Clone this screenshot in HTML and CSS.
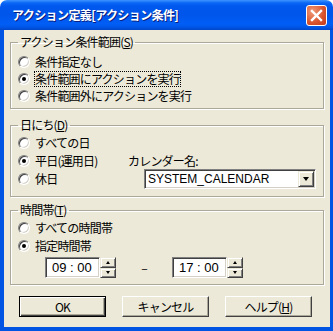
FILE: index.html
```html
<!DOCTYPE html>
<html lang="ja">
<head>
	<meta charset="UTF-8" />
	<title>アクション定義</title>
	<link rel="stylesheet" href="styles.css">
</head>
<body>
<div class="window">
	<div class="titlebar">
		<span class="title">アクション定義[アクション条件]</span>
		<span class="close">
			<svg width="13" height="13" viewBox="0 0 13 13"><path d="M2 2 L11 11 M11 2 L2 11" stroke="#fff" stroke-width="2.4" stroke-linecap="square"/></svg>
		</span>
	</div>
	<div class="client">
		<fieldset class="group g1">
			<legend>アクション条件範囲(<u>S</u>)</legend>
			<label class="radio"><span class="rb"></span>条件指定なし</label>
			<label class="radio on"><span class="rb"></span><span class="focus">条件範囲にアクションを実行</span></label>
			<label class="radio"><span class="rb"></span>条件範囲外にアクションを実行</label>
		</fieldset>

		<fieldset class="group g2">
			<legend>日にち(<u>D</u>)</legend>
			<div class="days">
				<label class="radio"><span class="rb"></span>すべての日</label>
				<span></span>
				<label class="radio on"><span class="rb"></span>平日(運用日)</label>
				<span class="cal-label">カレンダー名:</span>
				<label class="radio"><span class="rb"></span>休日</label>
				<div class="combo">
					<span class="combo-text">SYSTEM_CALENDAR</span>
					<span class="combo-btn"><span class="tri-down"></span></span>
				</div>
			</div>
		</fieldset>

		<fieldset class="group g3">
			<legend>時間帯(<u>T</u>)</legend>
			<label class="radio"><span class="rb"></span>すべての時間帯</label>
			<label class="radio on"><span class="rb"></span>指定時間帯</label>
			<div class="times">
				<div class="spin">
					<span class="edit">09 : 00</span>
					<span class="arrows">
						<span class="arr"><span class="tri-up"></span></span>
						<span class="arr"><span class="tri-down small"></span></span>
					</span>
				</div>
				<span class="dash">–</span>
				<div class="spin">
					<span class="edit">17 : 00</span>
					<span class="arrows">
						<span class="arr"><span class="tri-up"></span></span>
						<span class="arr"><span class="tri-down small"></span></span>
					</span>
				</div>
			</div>
		</fieldset>

		<div class="buttons">
			<span class="btn default">OK</span>
			<span class="btn">キャンセル</span>
			<span class="btn">ヘルプ(<u>H</u>)</span>
		</div>
	</div>
</div>
</body>
</html>
```

FILE: styles.css
```css
body{margin:0;background:#fff;font:12px/14px "Noto Sans CJK JP",sans-serif;color:#000;letter-spacing:-0.8px;}
.window{width:333px;height:331px;display:flex;flex-direction:column;}

/* title bar */
.titlebar{height:30px;display:flex;align-items:center;justify-content:space-between;padding:0 6px 0 12px;box-sizing:border-box;border-radius:7px 7px 0 0;background:linear-gradient(#3d95ff 0,#0a66f5 3px,#0058ee 6px,#0055ea 50%,#005ff7 80%,#0054e3 92%,#0046c8 100%);}
.title{color:#fff;font-weight:bold;font-size:12px;text-shadow:1px 1px #0a1f80;letter-spacing:-0.6px;}
.close{width:21px;height:21px;box-sizing:border-box;border:1px solid #fff;border-radius:3px;display:flex;align-items:center;justify-content:center;background:radial-gradient(circle at 30% 30%,#f09a78,#d9532c 60%,#c2391b);}

/* client area */
.client{flex:1;background:#ece9d8;border:solid #0054e3;border-width:0 3px 4px 4px;padding:5px 6px 0 6px;display:flex;flex-direction:column;}

.group{margin:0;padding:4px 6px 4px 7px;border:1px solid #aca899;box-shadow:inset 1px 1px #fff,1px 1px #fff;}
.group legend{padding:0 2px;line-height:14px;}
.g2{margin-top:9px;padding-top:2px;padding-bottom:8px;}
.g3{margin-top:6px;padding-top:2px;padding-bottom:6px;}

/* radio buttons */
.radio{display:flex;align-items:center;height:17px;gap:5px;}
.g2 .radio,.g3 .radio{height:18px;}
.rb{width:12px;height:12px;box-sizing:border-box;border-radius:50%;background:#fff;border:1px solid;border-color:#808080 #fff #fff #808080;box-shadow:inset 1px 1px #404040,inset -1px -1px #d4d0c8;display:flex;align-items:center;justify-content:center;flex:none;}
.on .rb::after{content:"";width:4px;height:4px;border-radius:50%;background:#000;}
.focus{outline:1px dotted #000;outline-offset:0;}

/* calendar */
.days{display:grid;grid-template-columns:110px 1fr;grid-auto-rows:18px;align-items:center;}
.combo{display:flex;width:172px;height:20px;margin-left:16px;box-sizing:border-box;background:#fff;border:1px solid;border-color:#808080 #fff #fff #808080;box-shadow:inset 1px 1px #404040,inset -1px -1px #d4d0c8;padding:1px;align-items:center;}
.combo-text{flex:1;padding-left:2px;font-family:"Liberation Sans",sans-serif;font-size:12px;letter-spacing:0;}
.combo-btn{width:16px;height:16px;box-sizing:border-box;background:#ece9d8;border:1px solid;border-color:#ece9d8 #404040 #404040 #ece9d8;box-shadow:inset 1px 1px #fff,inset -1px -1px #808080;display:flex;align-items:center;justify-content:center;}
.tri-down{width:0;height:0;border-left:3.5px solid transparent;border-right:3.5px solid transparent;border-top:4px solid #000;}
.tri-down.small{border-left-width:2.5px;border-right-width:2.5px;border-top-width:3px;}
.tri-up{width:0;height:0;border-left:2.5px solid transparent;border-right:2.5px solid transparent;border-bottom:3px solid #000;}

/* time spinners */
.times{display:flex;align-items:center;margin:2px 0 0 27px;height:21px;}
.spin{display:flex;height:21px;}
.edit{width:55px;box-sizing:border-box;background:#fff;border:1px solid;border-color:#808080 #fff #fff #808080;box-shadow:inset 1px 1px #404040,inset -1px -1px #d4d0c8;padding-left:6px;display:flex;align-items:center;font-family:"Liberation Sans",sans-serif;font-size:13px;letter-spacing:0;}
.arrows{width:16px;display:flex;flex-direction:column;}
.arr{flex:1;box-sizing:border-box;background:#ece9d8;border:1px solid;border-color:#ece9d8 #404040 #404040 #ece9d8;box-shadow:inset 1px 1px #fff,inset -1px -1px #808080;display:flex;align-items:center;justify-content:center;}
.dash{width:56px;text-align:center;}

/* buttons */
.buttons{display:flex;gap:16px;margin:11px 0 0 9px;}
.btn{width:87px;height:21px;box-sizing:border-box;display:flex;align-items:center;justify-content:center;background:#ece9d8;border:1px solid;border-color:#fff #404040 #404040 #fff;box-shadow:inset -1px -1px #aca899;}
.btn.default{border-color:#000;box-shadow:inset 1px 1px #fff,inset -1px -1px #404040,inset -2px -2px #aca899;}
```
